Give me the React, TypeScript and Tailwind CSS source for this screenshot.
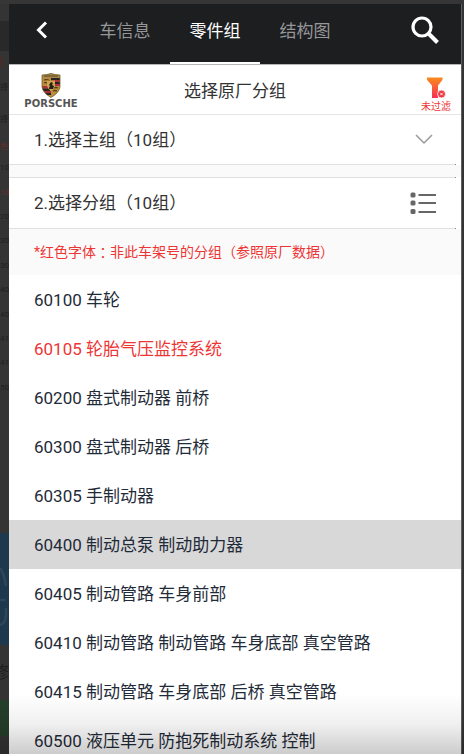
import { useState } from 'react';

type Part = { code: string; name: string; foreign?: boolean };

const parts: Part[] = [
  { code: '60100', name: '车轮' },
  { code: '60105', name: '轮胎气压监控系统', foreign: true },
  { code: '60200', name: '盘式制动器 前桥' },
  { code: '60300', name: '盘式制动器 后桥' },
  { code: '60305', name: '手制动器' },
  { code: '60400', name: '制动总泵 制动助力器' },
  { code: '60405', name: '制动管路 车身前部' },
  { code: '60410', name: '制动管路 制动管路 车身底部 真空管路' },
  { code: '60415', name: '制动管路 车身底部 后桥 真空管路' },
  { code: '60500', name: '液压单元 防抱死制动系统 控制' },
];

const tabs = ['车信息', '零件组', '结构图'];

const backdropRows = ['10', '10', '20', '30', '30', '40', '40', '41', '41', '50'];

function Divider() {
  return (
    <div className="flex h-px shrink-0 pr-[5px]">
      <div className="flex-1 bg-[#e0e0e0]" />
      <div className="w-px bg-[#8a8a8a]" />
    </div>
  );
}

function Crest() {
  return (
    <svg width="20" height="25" viewBox="0 0 20 25" aria-hidden="true">
      <defs>
        <clipPath id="shield">
          <path d="M1 2Q5 2 10 0.5Q15 2 19 2V14Q18 20 10 24.500Q2 20 1 14Z" />
        </clipPath>
      </defs>
      <g clipPath="url(#shield)">
        <rect width="20" height="25" fill="#b98d3e" />
        <rect width="20" height="5" fill="#a98a4a" />
        <path d="M3 3h14" stroke="#5c4720" strokeWidth="1" />
        <path d="M3 7q3-1 6 1M3 10q2-1 5 1" stroke="#5a3d17" strokeWidth="1.300" fill="none" />
        <path d="M10 5h10v2H10zM10 9h10v2H10z" fill="#2a2323" />
        <path d="M10 7h10v2H10zM11 11h9v2h-9z" fill="#a93235" />
        <path d="M0 13h9v2.500H0zM2 18h8v2H2z" fill="#a93235" />
        <path d="M0 15.500h9V18H0zM4 20h6v2H4z" fill="#2a2323" />
        <path d="M12 15q3-1 5 0M12 18q2-1 4 0" stroke="#5a3d17" strokeWidth="1.300" fill="none" />
        <path d="M6 7.500h8V13q-1 3-4 5-3-2-4-5z" fill="#cfa54f" />
        <path d="M8 16q0-2 1-3l-1-1 2-3 2 1-1 2 2 1-1 3z" fill="#251f1a" />
      </g>
      <path d="M1 2Q5 2 10 0.5Q15 2 19 2V14Q18 20 10 24.500Q2 20 1 14Z" fill="none" stroke="#74602f" strokeWidth="0.800" />
    </svg>
  );
}

function FilterIcon() {
  return (
    <svg width="20" height="22" viewBox="0 0 20 22" aria-hidden="true">
      <defs>
        <linearGradient id="funnel" x1="0" y1="0" x2="0" y2="1">
          <stop offset="0" stopColor="#f98a1d" />
          <stop offset="1" stopColor="#f52f56" />
        </linearGradient>
      </defs>
      <path d="M1 0.500h15.500q0.500 1.500-0.500 3L12 8.500V21H6V8.500L1.500 3.500q-1-1.500-0.500-3z" fill="url(#funnel)" />
      <circle cx="15.500" cy="17" r="4" fill="#ee3540" stroke="#fff" strokeWidth="0.800" />
      <path d="M14.200 15.700l2.600 2.600M16.800 15.700l-2.600 2.600" stroke="#fff" strokeWidth="0.900" />
    </svg>
  );
}

function Backdrop() {
  return (
    <aside
      aria-hidden="true"
      className="flex w-[9px] shrink-0 flex-col overflow-hidden whitespace-nowrap bg-[#343434] text-[8px] text-[#1f1f1f]"
    >
      <div className="h-[17px] shrink-0" />
      <div className="h-[30px] shrink-0 bg-[#292929]" />
      <div className="flex h-[22px] shrink-0 items-center">
        <span className="h-2.5 w-0.5 rounded-br-full bg-[#4a2b25]" />
      </div>
      <div className="flex h-[30px] shrink-0 items-center">择</div>
      <div className="flex h-[34px] shrink-0 items-center">择</div>
      <div className="flex h-[19px] shrink-0 items-center text-[#692d2d]">色</div>
      <div className="grid h-[244px] shrink-0 auto-rows-fr items-center">
        {backdropRows.map((row, i) => (
          <span key={i} className={i === 1 ? 'text-[#692d2d]' : ''}>
            {row}
          </span>
        ))}
      </div>
      <div className="h-[133px] shrink-0" />
      <div className="h-[112px] shrink-0 bg-[#1e384d]">
        <svg width="8" height="112" viewBox="0 0 8 112">
          <path d="M0 35Q4 40 6 53M0 67h6M6 75v8q-1 8-6 9" fill="none" stroke="#2f4658" strokeWidth="2.500" />
        </svg>
      </div>
      <div className="flex h-[55px] shrink-0 items-center justify-end text-[16px]">修</div>
      <div className="h-9 shrink-0 bg-[#243f2b]" />
    </aside>
  );
}

export default function App() {
  const [tab, setTab] = useState(1);
  const [selected, setSelected] = useState('60400');

  return (
    <div
      lang="zh-CN"
      className="relative flex h-screen overflow-hidden bg-[#363636] pt-1 font-[Roboto,'Noto_Sans_CJK_SC',sans-serif] text-[17px] leading-6 text-[#333333]"
    >
      <Backdrop />
      <main className="flex min-w-0 flex-1 flex-col bg-white">
        <header className="flex h-[61px] shrink-0 border-b border-[#b5b5b5] bg-[#1d1e20] text-white">
          <button aria-label="返回" className="flex w-[71px] items-center pb-2 pl-[27px]">
            <svg width="12" height="18" viewBox="0 0 12 18" fill="none" stroke="currentColor" strokeWidth="3">
              <path d="M10 1.500L2.500 9L10 16.500" />
            </svg>
          </button>
          <nav className="flex">
            {tabs.map((label, i) => (
              <button
                key={label}
                onClick={() => setTab(i)}
                className={
                  i === tab
                    ? 'w-[90px] border-b-2 border-white pb-1'
                    : 'w-[90px] border-b-2 border-transparent pb-1 text-[#96979a]'
                }
              >
                {label}
              </button>
            ))}
          </nav>
          <button aria-label="搜索" className="ml-auto flex items-center pr-[22px] pb-2">
            <svg width="28" height="28" viewBox="0 0 28 28" fill="none" stroke="currentColor">
              <circle cx="11" cy="11" r="9" strokeWidth="3.200" />
              <path d="M17.500 17.500L26.500 26.500" strokeWidth="4" />
            </svg>
          </button>
        </header>

        <section className="grid h-[50px] shrink-0 grid-cols-[1fr_auto_1fr] border-b border-[#e6e6e6]">
          <div className="flex w-[84px] flex-col items-center pt-2">
            <Crest />
            <span className="font-['DejaVu_Sans',sans-serif] text-[10px] leading-3 font-bold text-[#555]">
              PORSCHE
            </span>
          </div>
          <h1 className="flex items-center pt-0.5">选择原厂分组</h1>
          <button className="flex w-[50px] flex-col items-center justify-self-end pt-3">
            <FilterIcon />
            <span className="text-[10px] leading-4 text-[#ee3535]">未过滤</span>
          </button>
        </section>

        <button className="flex h-[49px] shrink-0 items-center justify-between pr-7 pl-[25px]">
          <span>1.选择主组（10组）</span>
          <svg width="18" height="11" viewBox="0 0 18 11" fill="none" stroke="#999" strokeWidth="1.500">
            <path d="M1 1L9 9L17 1" />
          </svg>
        </button>
        <Divider />
        <div className="h-3 shrink-0 bg-[#fafafa]" />
        <Divider />
        <button className="flex h-[50px] shrink-0 items-center justify-between pr-[25px] pl-[25px]">
          <span>2.选择分组（10组）</span>
          <svg width="26" height="23" viewBox="0 0 26 23" fill="#666">
            <rect x="0.500" y="0.500" width="5" height="5" rx="1.500" />
            <rect x="0.500" y="8.500" width="5" height="5" rx="1.500" />
            <rect x="0.500" y="17" width="5" height="5" rx="1.500" />
            <rect x="8.500" y="2" width="17.500" height="2" />
            <rect x="8.500" y="10" width="17.500" height="2" />
            <rect x="8.500" y="19" width="17.500" height="2" />
          </svg>
        </button>
        <Divider />
        <p className="flex h-[46px] shrink-0 items-center bg-[#fafafa] pl-[25px] text-[14px] text-[#ee3535]">
          *红色字体
          <span className="font-['Noto_Sans_CJK_TC',sans-serif]" lang="zh-TW">：</span>
          非此车架号的分组（参照原厂数据）
        </p>

        <ul className="min-h-0 flex-1 overflow-hidden">
          {parts.map((part) => (
            <li key={part.code}>
              <button
                onClick={() => setSelected(part.code)}
                className={`block h-[49px] w-full pl-[25px] text-left ${
                  part.code === selected ? 'bg-[#d8d8d8]' : ''
                } ${part.foreign ? 'text-[#ee3535]' : 'text-[#1f2b38]'}`}
              >
                {part.code} {part.name}
              </button>
            </li>
          ))}
        </ul>
      </main>
      <div className="w-[3px] shrink-0 border-l border-[#606060] bg-[#343434]" />
      <div className="pointer-events-none absolute inset-x-0 bottom-0 h-[60px] bg-linear-to-t from-black/20 via-black/6 to-transparent" />
    </div>
  );
}
